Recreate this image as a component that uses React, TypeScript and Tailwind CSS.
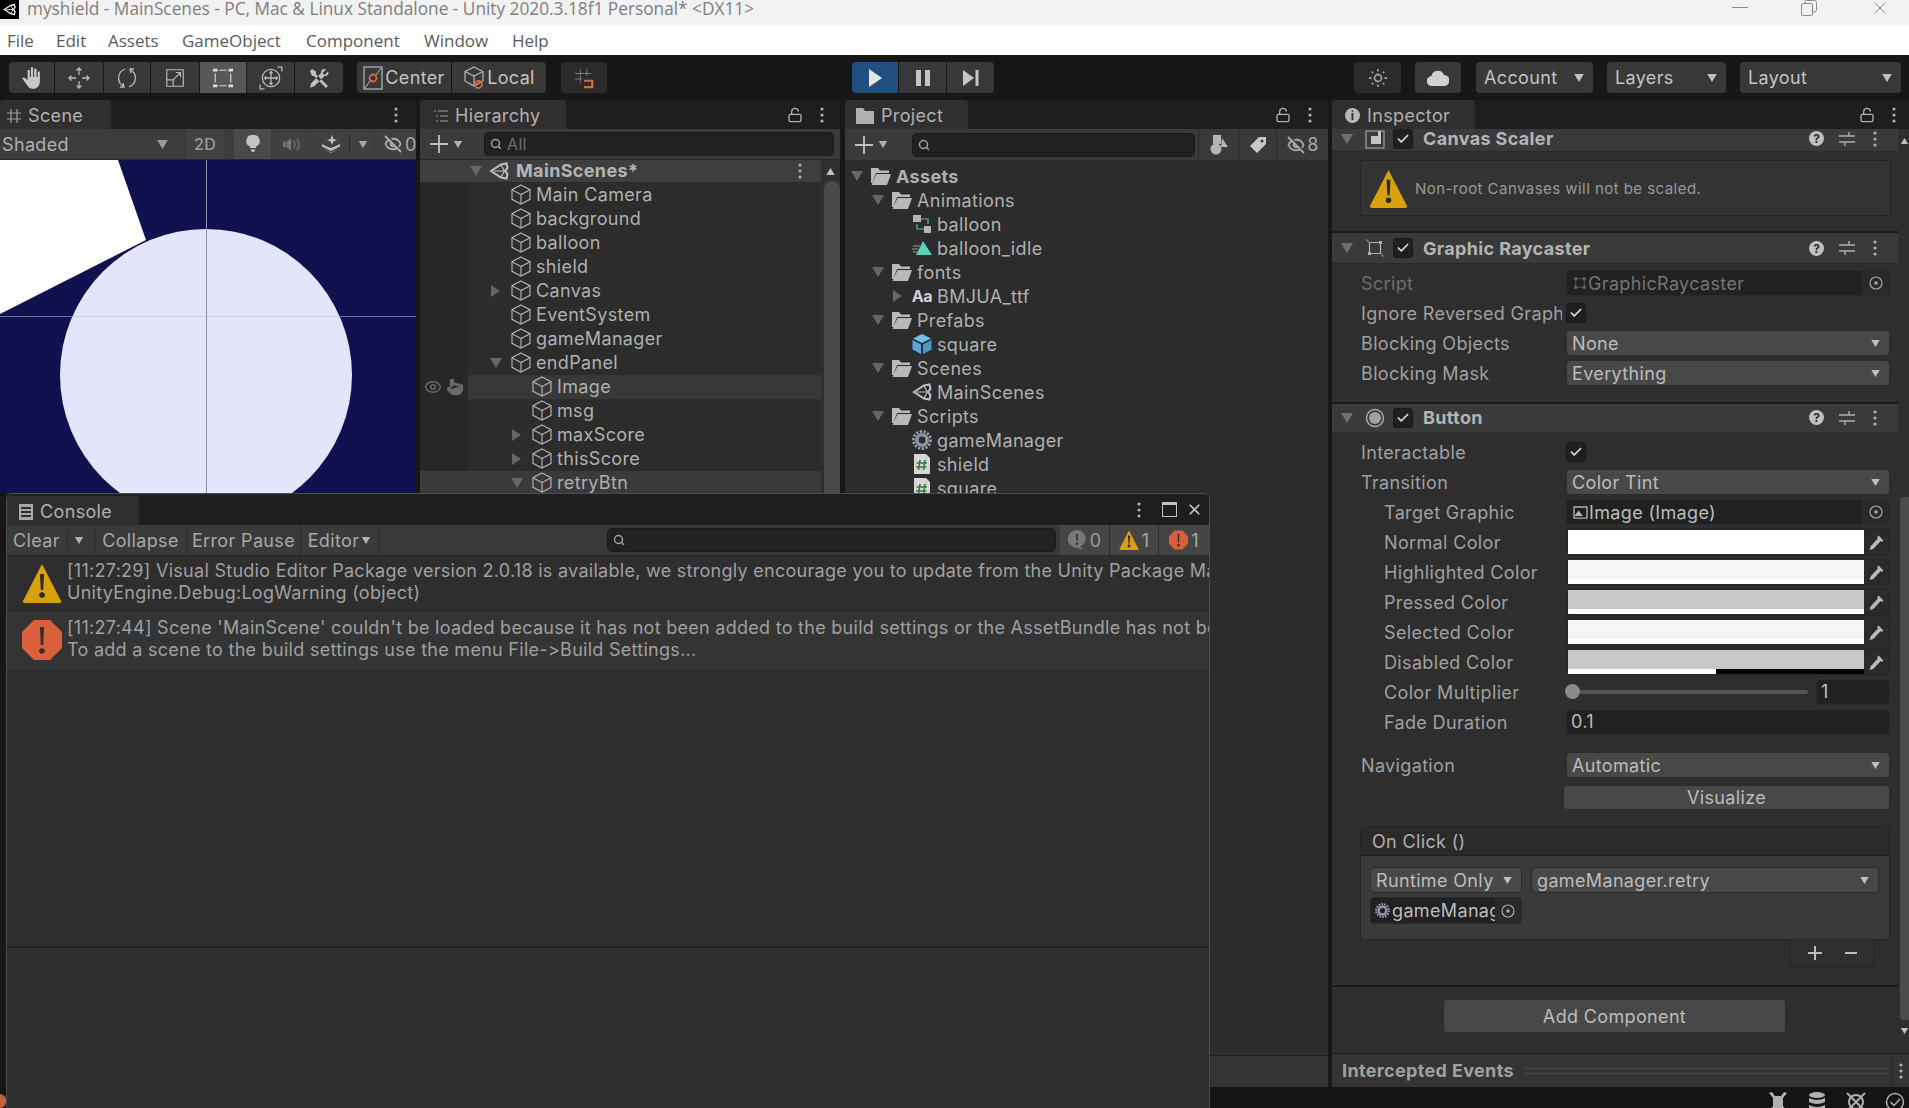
import React from 'react'
import { Check, Eye, EyeOff, LockOpen, Pointer, Search, X } from 'lucide-react'

const Tri = ({ dir = 'down', className = 'w-[11px] h-[9px] text-[#9a9a9a]' }: { dir?: 'down' | 'right' | 'up'; className?: string }) => (
  <svg viewBox="0 0 12 10" className={className}>
    {dir === 'down' && <path d="M0 0H12L6 10Z" fill="currentColor" />}
    {dir === 'up' && <path d="M0 10H12L6 0Z" fill="currentColor" />}
    {dir === 'right' && <path d="M1 -1V11L10 5Z" fill="currentColor" />}
  </svg>
)

const Kebab = ({ className = '' }: { className?: string }) => (
  <svg viewBox="0 0 4 16" className={`w-[4px] h-[16px] text-[#b0b0b0] ${className}`}>
    <circle cx="2" cy="2" r="1.6" fill="currentColor" />
    <circle cx="2" cy="8" r="1.6" fill="currentColor" />
    <circle cx="2" cy="14" r="1.6" fill="currentColor" />
  </svg>
)

const Cube = () => (
  <svg viewBox="0 0 20 20" className="w-[20px] h-[21px] shrink-0 text-[#b0b0b0]" fill="none" stroke="currentColor" strokeWidth="1.2">
    <path d="M10 .5L19 5.2V14.8L10 19.5L1 14.8V5.2Z" />
    <path d="M1 5.2L10 10L19 5.2M10 10V19.5" />
  </svg>
)

const UnityMark = ({ className = 'w-[20px] h-[20px] text-[#c0c0c0]' }: { className?: string }) => (
  <svg viewBox="0 0 20 20" className={`shrink-0 ${className}`} fill="none" stroke="currentColor" strokeWidth="2">
    <path d="M2 10L12 3.5L17.5 2.5L18.5 7L16 10L18.5 13L17.5 17.5L12 16.5Z" />
    <path d="M5 10H15.5M15.5 10L12 4M15.5 10L12 16" strokeWidth="1.2" />
  </svg>
)

const FolderOpen = () => (
  <svg viewBox="0 0 20 18" className="w-[20px] h-[18px] shrink-0">
    <path d="M0 1H7L9 3.5H18V6H5L1.5 16H0Z" fill="#b9b9b9" />
    <path d="M5.5 7H20L16 18H0.5Z" fill="#b9b9b9" />
  </svg>
)

const Gear = ({ className = 'w-[20px] h-[20px]', hole = '#2c2c2c' }: { className?: string; hole?: string }) => (
  <svg viewBox="0 0 20 20" className={`shrink-0 ${className}`}>
    <circle cx="10" cy="10" r="8.6" fill="none" stroke="#9aa0b4" strokeWidth="2.6" strokeDasharray="2.2 1.6" />
    <circle cx="10" cy="10" r="7" fill="#8d92a6" />
    <circle cx="10" cy="10" r="3.4" fill={hole} />
  </svg>
)

const ScriptIcon = () => (
  <svg viewBox="0 0 20 20" className="w-[20px] h-[20px] shrink-0">
    <path d="M2 0H14L18 4V20H2Z" fill="#d6d6d6" />
    <path d="M8 6L6.5 16M13 6L11.5 16M4.5 9H15M4 13H14.5" stroke="#2f7d3c" strokeWidth="1.6" fill="none" />
  </svg>
)

const Warn = ({ className = 'w-[40px] h-[40px]' }: { className?: string }) => (
  <svg viewBox="0 0 40 40" className={`shrink-0 ${className}`}>
    <path d="M20 1L39 38Q39.5 40 37 40H3Q0.5 40 1 38Z" fill="#d9a10d" />
    <path d="M18 11H22L21.2 27H18.8Z" fill="#2a2a2a" />
    <circle cx="20" cy="32" r="2.8" fill="#2a2a2a" />
  </svg>
)

const ErrorIcon = ({ className = 'w-[40px] h-[40px]' }: { className?: string }) => (
  <svg viewBox="0 0 40 40" className={`shrink-0 ${className}`}>
    <path d="M12 0H28L40 12V28L28 40H12L0 28V12Z" fill="#d9603a" />
    <path d="M18 7H22L21.2 25H18.8Z" fill="#2f2f2f" />
    <circle cx="20" cy="31" r="2.8" fill="#2f2f2f" />
  </svg>
)

const Sliders = () => (
  <svg viewBox="0 0 16 16" className="w-[16px] h-[16px] text-[#b0b0b0]" fill="none" stroke="currentColor" strokeWidth="1.4">
    <path d="M0 5H16M0 11H16M10 1V5M6 11V15" />
  </svg>
)

const HelpDot = () => (
  <span className="w-[15px] h-[15px] rounded-full bg-[#c0c0c0] text-[#2d2d2d] text-[12px] font-bold leading-[15px] text-center tracking-normal">?</span>
)

const Target = () => (
  <svg viewBox="0 0 14 14" className="w-[14px] h-[14px] text-[#a8a8a8]" fill="none" stroke="currentColor" strokeWidth="1.2">
    <circle cx="7" cy="7" r="6" />
    <circle cx="7" cy="7" r="1.8" fill="currentColor" stroke="none" />
  </svg>
)

const Dropper = () => (
  <svg viewBox="0 0 16 16" className="w-[17px] h-[17px] text-[#b8b8b8]" fill="currentColor">
    <path d="M10 1.5L14.5 6L13 7.5L12 6.5L5 14L1.5 15L2.5 11.5L9.5 4L8.5 3Z" />
  </svg>
)

const Btn = ({ className = '', bg = 'bg-[#383838]', children }: { className?: string; bg?: string; children?: React.ReactNode }) => (
  <div className={`h-[31px] flex items-center justify-center ${bg} ${className}`}>{children}</div>
)

const MENU = [
  { label: 'File', w: 'w-[49px]' },
  { label: 'Edit', w: 'w-[52px]' },
  { label: 'Assets', w: 'w-[74px]' },
  { label: 'GameObject', w: 'w-[124px]' },
  { label: 'Component', w: 'w-[118px]' },
  { label: 'Window', w: 'w-[88px]' },
  { label: 'Help', w: 'w-[60px]' },
]

const TopToolbar = () => (
  <div className="h-[45px] bg-[#171717] flex items-start pt-[7px] text-[#c4c4c4] shrink-0">
    <div className="ml-[9px] flex gap-px rounded-[4px] overflow-hidden">
      <Btn className="w-[45px]">
        <svg viewBox="0 0 24 24" className="w-[26px] h-[26px] text-[#c8c8c8]" fill="currentColor">
          <path d="M11 2h2v9h1V3.5h2.2V11h1V6h2.1v9c0 4-2.5 7-6.3 7-3 0-4.5-1.5-6-4L3 12.5l1.6-1.2L8 14V4.5h2V11h1Z" />
        </svg>
      </Btn>
      <Btn className="w-[48px]">
        <svg viewBox="0 0 24 24" className="w-[24px] h-[24px] text-[#b8b8b8]" fill="none" stroke="currentColor" strokeWidth="1.3">
          <path d="M12 2V9M12 15V22M2 12H9M15 12H22M9.5 4.5L12 2L14.5 4.5M9.5 19.5L12 22L14.5 19.5M4.5 9.5L2 12L4.5 14.5M19.5 9.5L22 12L19.5 14.5" />
        </svg>
      </Btn>
      <Btn className="w-[46px]">
        <svg viewBox="0 0 24 24" className="w-[24px] h-[24px] text-[#b8b8b8]" fill="none" stroke="currentColor" strokeWidth="1.3">
          <path d="M10 3A9.5 9.5 0 0 0 9 20.5M14 21A9.5 9.5 0 0 0 15 3.5M8 17L9 21L5 21M16 7L15 3L19 3" />
        </svg>
      </Btn>
      <Btn className="w-[48px]">
        <svg viewBox="0 0 24 24" className="w-[22px] h-[22px] text-[#b8b8b8]" fill="none" stroke="currentColor" strokeWidth="1.3">
          <path d="M3 3H21V21H3ZM3 14H10V21M10 14L18 6M13 6H18V11" />
        </svg>
      </Btn>
      <Btn className="w-[46px]" bg="bg-[#585858]">
        <svg viewBox="0 0 24 24" className="w-[22px] h-[22px] text-[#dcdcdc]" fill="currentColor">
          <path d="M1 2H6V5H1ZM18 2H23V5H18ZM1 19H6V22H1ZM18 19H23V22H18Z" />
          <path d="M8 3.5H16M8 20.5H16M3.5 7V17M20.5 7V17" stroke="currentColor" strokeWidth="1.2" />
        </svg>
      </Btn>
      <Btn className="w-[47px]">
        <svg viewBox="0 0 24 24" className="w-[26px] h-[26px] text-[#b8b8b8]" fill="none" stroke="currentColor" strokeWidth="1.2">
          <circle cx="12" cy="12" r="8" />
          <path d="M12 6V18M6 12H18M10.5 7.5L12 6L13.5 7.5M10.5 16.5L12 18L13.5 16.5M7.5 10.5L6 12L7.5 13.5M16.5 10.5L18 12L16.5 13.5M2 18V22H6M22 6V2H18" />
        </svg>
      </Btn>
      <Btn className="w-[48px]">
        <svg viewBox="0 0 24 24" className="w-[24px] h-[24px] text-[#c0c0c0]" fill="currentColor">
          <path d="M3 5L5 3L9 5.5V8L21 20L19 22L7 10H5ZM21 5.5L17.5 9L15.5 7L19 3.5C16.5 2 13.5 4 14 7L4 17.5L3 21.5L7 20.5L17.5 10C20 10.5 22.5 8 21 5.5Z" />
        </svg>
      </Btn>
    </div>
    <div className="ml-[14px] flex gap-px rounded-[4px] overflow-hidden text-[18px]">
      <Btn className="w-[94px] gap-[2px]">
        <svg viewBox="0 0 20 24" className="w-[20px] h-[24px]" fill="none">
          <rect x="1" y="1" width="18" height="22" stroke="#b8b8b8" strokeWidth="1.2" />
          <circle cx="10" cy="12" r="3.5" stroke="#e06c3c" strokeWidth="1.8" />
          <path d="M2 22L7 15M13 9L18 2" stroke="#b8b8b8" strokeWidth="1" />
        </svg>
        Center
      </Btn>
      <Btn className="w-[94px] gap-[2px]">
        <svg viewBox="0 0 22 24" className="w-[22px] h-[24px]" fill="none" stroke="#b8b8b8" strokeWidth="1.2">
          <path d="M11 1L20 5.5V15L11 20L2 15V5.5Z" />
          <path d="M2 5.5L11 10L20 5.5M11 10V20" />
          <circle cx="15.5" cy="18.5" r="3.5" stroke="#e06c3c" strokeWidth="1.8" />
        </svg>
        Local
      </Btn>
    </div>
    <Btn className="ml-[15px] w-[46px] rounded-[4px]" bg="bg-[#2a2a2a]">
      <svg viewBox="0 0 24 24" className="w-[22px] h-[22px]" fill="none" stroke="#7a7a7a" strokeWidth="1.1">
        <path d="M8 2V18M15 2V10M2 7H20M2 13H10" />
        <path d="M12 15H21V22H12" stroke="#d86c3c" strokeWidth="2.4" />
      </svg>
    </Btn>
    <div className="ml-[245px] flex gap-px rounded-[4px] overflow-hidden">
      <Btn className="w-[46px]" bg="bg-[#1f4f7f]">
        <svg viewBox="0 0 14 18" className="w-[14px] h-[18px]"><path d="M1 0V18L14 9Z" fill="#e6e6e6" /></svg>
      </Btn>
      <Btn className="w-[47px]">
        <svg viewBox="0 0 14 18" className="w-[14px] h-[18px]"><path d="M0 1H5V17H0ZM9 1H14V17H9Z" fill="#c4c4c4" /></svg>
      </Btn>
      <Btn className="w-[47px]">
        <svg viewBox="0 0 16 18" className="w-[16px] h-[18px]"><path d="M0 1V17L11 9ZM12.5 1H15.5V17H12.5Z" fill="#c4c4c4" /></svg>
      </Btn>
    </div>
    <Btn className="ml-[360px] w-[47px] rounded-[4px]" bg="bg-[#2a2a2a]">
      <svg viewBox="0 0 20 20" className="w-[20px] h-[20px] text-[#9a9a9a]" fill="none" stroke="currentColor" strokeWidth="1.8">
        <circle cx="10" cy="10" r="3.5" />
        <path d="M10 1V3.5M10 16.5V19M1 10H3.5M16.5 10H19M3.7 3.7L5.2 5.2M14.8 14.8L16.3 16.3M3.7 16.3L5.2 14.8M14.8 5.2L16.3 3.7" />
      </svg>
    </Btn>
    <Btn className="ml-[14px] w-[46px] rounded-[4px]">
      <svg viewBox="0 0 22 16" className="w-[22px] h-[16px]" fill="#d0d0d0"><path d="M5 16A5 5 0 0 1 4.5 6A6.5 6.5 0 0 1 17 5A5.5 5.5 0 0 1 17 16Z" /></svg>
    </Btn>
    {[
      { label: 'Account', cls: 'ml-[15px] w-[117px]' },
      { label: 'Layers', cls: 'ml-[14px] w-[119px]' },
      { label: 'Layout', cls: 'ml-[14px] w-[161px]' },
    ].map((b) => (
      <Btn key={b.label} className={`${b.cls} rounded-[4px] !justify-between pl-[8px] pr-[8px] text-[18px]`}>
        {b.label}
        <Tri className="w-[12px] h-[8px] text-[#c0c0c0]" />
      </Btn>
    ))}
  </div>
)

const Tab = ({ icon, label, w }: { icon: React.ReactNode; label: string; w: string }) => (
  <div className={`h-[29px] ${w} rounded-t-[4px] bg-[#2f2f2f] flex items-center gap-[7px] pl-[7px] pt-[2px] text-[18px] text-[#b0b0b0] shrink-0`}>
    {icon}
    {label}
  </div>
)

const TabBar = ({ children, tools, pad = 'pr-[16px]' }: { children: React.ReactNode; tools?: React.ReactNode; pad?: string }) => (
  <div className="h-[29px] bg-[#1e1e1e] flex items-center shrink-0">
    {children}
    <div className={`ml-auto flex items-center gap-[17px] ${pad}`}>{tools}</div>
  </div>
)

const SearchBox = ({ className, placeholder }: { className: string; placeholder?: string }) => (
  <div className={`h-[24px] rounded-[5px] bg-[#212121] border border-[#191919] flex items-center gap-[5px] pl-[5px] text-[16px] text-[#6e6e6e] ${className}`}>
    <Search className="w-[12px] h-[12px] text-[#a0a0a0]" strokeWidth={3} />
    {placeholder}
  </div>
)

const Plus = () => (
  <div className="flex items-center gap-[5px]">
    <svg viewBox="0 0 18 18" className="w-[18px] h-[18px] text-[#c0c0c0]" fill="none" stroke="currentColor" strokeWidth="1.8"><path d="M9 0V18M0 9H18" /></svg>
    <Tri className="w-[10px] h-[7px] text-[#b0b0b0]" />
  </div>
)

const ScenePanel = () => (
  <div className="w-[416px] mr-[4px] flex flex-col shrink-0">
    <TabBar tools={<Kebab />} pad="pr-[18px]">
      <Tab
        w="w-[111px]"
        label="Scene"
        icon={
          <svg viewBox="0 0 14 14" className="w-[14px] h-[14px] text-[#a0a0a0]" fill="none" stroke="currentColor" strokeWidth="1.2"><path d="M4 0V14M10 0V14M0 4H14M0 10H14" /></svg>
        }
      />
    </TabBar>
    <div className="h-[31px] bg-[#3c3c3c] flex items-center text-[#a8a8a8] text-[18px] shrink-0 border-b border-[#262626]">
      <div className="w-[176px] flex items-center justify-between pl-[2px] pr-[8px] text-[#b0b0b0]">Shaded<Tri /></div>
      <div className="ml-[10px] w-[38px] h-full bg-[#424242] flex items-center justify-center text-[16px] text-[#9c9c9c] font-medium">2D</div>
      <div className="ml-[10px] w-[37px] h-full bg-[#4a4a4a] flex items-center justify-center">
        <svg viewBox="0 0 14 18" className="w-[14px] h-[18px]" fill="#c4c4c4"><path d="M7 0A6 6 0 0 1 10 11.5V13H4V11.5A6 6 0 0 1 7 0ZM4.5 14.5H9.5L8 17H6Z" /></svg>
      </div>
      <div className="ml-[2px] w-[38px] h-full bg-[#404040] flex items-center justify-center">
        <svg viewBox="0 0 20 14" className="w-[18px] h-[13px]" fill="#777"><path d="M0 4H3V10H0ZM4 4L9 0V14L4 10ZM11 3Q14 7 11 11L12 12Q16 7 12 2ZM15 1Q19 7 15 13L16 14Q21 7 16 0Z" /></svg>
      </div>
      <div className="ml-px w-[61px] h-full bg-[#404040] flex items-center pl-[9px]">
        <svg viewBox="0 0 20 18" className="w-[20px] h-[18px]" fill="#c0c0c0"><path d="M11 0L12.5 4L16 5L12.5 6.5L11 10L9.5 6.5L6 5L9.5 4ZM1 9L6 11.5L10 13L15 11L19 9V11.5L10 16L1 11.5ZM1 13L10 18L19 13L10 17.5Z" /></svg>
        <div className="w-px h-[20px] bg-[#2a2a2a] ml-[8px] mr-[8px]" />
        <Tri className="w-[10px] h-[7px] text-[#a8a8a8]" />
      </div>
      <div className="ml-[2px] flex-1 h-full bg-[#404040] flex items-center pl-[7px] gap-px overflow-hidden">
        <EyeOff className="w-[22px] h-[18px] text-[#b0b0b0] shrink-0" strokeWidth={2.4} />
        <span>0</span>
      </div>
    </div>
    {/* scene view is a picture, drawn in one svg */}
    <svg viewBox="0 0 416 333" className="w-[416px] h-[333px] shrink-0">
      <rect width="416" height="333" fill="#11114f" />
      <path d="M0 0H118L146 80L0 154Z" fill="#ffffff" />
      <circle cx="206" cy="215" r="146" fill="#e4e4fb" />
      <path d="M206.5 0V333" stroke="#8e8ea8" strokeWidth="1" />
      <path d="M0 156.5H416" stroke="#b8b8e0" strokeWidth="1" opacity="0.55" />
    </svg>
  </div>
)

const HIERARCHY = [
  { name: 'Main Camera', pad: 'pl-[22px]' },
  { name: 'background', pad: 'pl-[22px]' },
  { name: 'balloon', pad: 'pl-[22px]' },
  { name: 'shield', pad: 'pl-[22px]' },
  { name: 'Canvas', pad: 'pl-[22px]', arrow: 'right' as const },
  { name: 'EventSystem', pad: 'pl-[22px]' },
  { name: 'gameManager', pad: 'pl-[22px]' },
  { name: 'endPanel', pad: 'pl-[22px]', arrow: 'down' as const },
  { name: 'Image', pad: 'pl-[43px]', hl: true, vis: true },
  { name: 'msg', pad: 'pl-[43px]' },
  { name: 'maxScore', pad: 'pl-[43px]', arrow: 'right' as const },
  { name: 'thisScore', pad: 'pl-[43px]', arrow: 'right' as const },
  { name: 'retryBtn', pad: 'pl-[43px]', arrow: 'down' as const, sel: true },
]

const HierarchyPanel = () => (
  <div className="w-[420px] mr-[5px] flex flex-col shrink-0">
    <TabBar
      tools={
        <>
          <LockOpen className="w-[16px] h-[16px] text-[#b0b0b0]" />
          <Kebab />
        </>
      }
    >
      <Tab
        w="w-[146px]"
        label="Hierarchy"
        icon={
          <svg viewBox="0 0 14 12" className="w-[14px] h-[12px] ml-[7px] text-[#a0a0a0]" fill="none" stroke="currentColor" strokeWidth="1.2"><path d="M0 1H2M4 1H14M2 6H4M6 6H14M2 11H4M6 11H14" /></svg>
        }
      />
    </TabBar>
    <div className="h-[31px] bg-[#3a3a3a] flex items-center pl-[10px] pr-[6px] shrink-0 border-b border-[#262626]">
      <Plus />
      <SearchBox className="ml-[21px] flex-1" placeholder="All" />
    </div>
    <div className="flex flex-1 min-h-0">
      <div className="flex-1 bg-[#2c2c2c]">
        <div className="h-[23px] bg-[#3e3e3e] border-b border-[#2a2a2a] flex items-center pl-[50px] pr-[19px] pb-[1px]">
          <Tri className="w-[12px] h-[12px] text-[#666]" />
          <span className="ml-[7px]"><UnityMark /></span>
          <span className="ml-[7px] text-[18px] font-bold text-[#b4b4b4]">MainScenes*</span>
          <Kebab className="ml-auto" />
        </div>
        {HIERARCHY.map((r) => (
          <div key={r.name} className={`h-[24px] flex ${r.sel ? 'bg-[#3a3a3a]' : ''}`}>
            <div className={`w-[48px] flex items-center gap-[2px] pl-[2px] shrink-0 ${r.sel ? '' : 'bg-[#272727]'}`}>
              {r.vis && (
                <>
                  <Eye className="w-[22px] h-[18px] text-[#666]" />
                  <Pointer className="w-[18px] h-[18px] text-[#6a6a6a]" fill="#6a6a6a" />
                </>
              )}
            </div>
            <div className={`flex-1 flex items-center pb-[1px] ${r.pad} ${r.hl ? 'bg-[#383838]' : ''}`}>
              <div className="w-[12px] shrink-0 flex justify-center">{r.arrow && <Tri dir={r.arrow} className="w-[12px] h-[12px] text-[#666]" />}</div>
              <span className="ml-[9px]"><Cube /></span>
              <span className="ml-[5px] text-[18px] text-[#b0b0b0]">{r.name}</span>
            </div>
          </div>
        ))}
      </div>
      <div className="w-[19px] bg-[#2f2f2f] flex flex-col items-center shrink-0">
        <Tri dir="up" className="w-[11px] h-[7px] mt-[8px] text-[#c0c0c0]" />
        <div className="mt-[6px] ml-[3px] w-[16px] flex-1 rounded-t-[8px] bg-[#4a4a4a]" />
      </div>
    </div>
  </div>
)

const PROJECT: { name: string; pad: string; icon: React.ReactNode; arrow?: 'down' | 'right'; bold?: boolean }[] = [
  { name: 'Assets', pad: 'pl-[6px]', icon: <FolderOpen />, arrow: 'down', bold: true },
  { name: 'Animations', pad: 'pl-[27px]', icon: <FolderOpen />, arrow: 'down' },
  {
    name: 'balloon',
    pad: 'pl-[47px]',
    icon: (
      <svg viewBox="0 0 20 20" className="w-[20px] h-[20px]">
        <path d="M6 5H16V10M15 15H5V10" fill="none" stroke="#4fc3a1" strokeWidth="1.2" />
        <rect x="1" y="1" width="8" height="7" fill="#b4b4b4" />
        <rect x="12" y="12" width="7" height="7" fill="#b4b4b4" />
      </svg>
    ),
  },
  {
    name: 'balloon_idle',
    pad: 'pl-[47px]',
    icon: (
      <svg viewBox="0 0 20 20" className="w-[20px] h-[20px]">
        <path d="M11 3L20 17H4Z" fill="#5fd0b8" />
        <path d="M1 8H8M0 11H6M1 14H5" stroke="#9a9a9a" strokeWidth="1" />
      </svg>
    ),
  },
  { name: 'fonts', pad: 'pl-[27px]', icon: <FolderOpen />, arrow: 'down' },
  { name: 'BMJUA_ttf', pad: 'pl-[47px]', icon: <span className="text-[16px] font-bold text-[#d0d0d0] tracking-tight">Aa</span>, arrow: 'right' },
  { name: 'Prefabs', pad: 'pl-[27px]', icon: <FolderOpen />, arrow: 'down' },
  {
    name: 'square',
    pad: 'pl-[47px]',
    icon: (
      <svg viewBox="0 0 20 20" className="w-[20px] h-[20px]">
        <path d="M10 0L19 4.5L10 9L1 4.5Z" fill="#6fc0ec" />
        <path d="M0.5 6L9 10.5V20L0.5 15.5Z" fill="#57a8d8" />
        <path d="M19.5 6L11 10.5V20L19.5 15.5Z" fill="#4a98c8" />
      </svg>
    ),
  },
  { name: 'Scenes', pad: 'pl-[27px]', icon: <FolderOpen />, arrow: 'down' },
  { name: 'MainScenes', pad: 'pl-[47px]', icon: <UnityMark /> },
  { name: 'Scripts', pad: 'pl-[27px]', icon: <FolderOpen />, arrow: 'down' },
  { name: 'gameManager', pad: 'pl-[47px]', icon: <Gear /> },
  { name: 'shield', pad: 'pl-[47px]', icon: <ScriptIcon /> },
  { name: 'square', pad: 'pl-[47px]', icon: <ScriptIcon /> },
]

const ProjectPanel = () => (
  <div className="w-[483px] mr-[4px] flex flex-col shrink-0">
    <TabBar
      tools={
        <>
          <LockOpen className="w-[16px] h-[16px] text-[#b0b0b0]" />
          <Kebab />
        </>
      }
    >
      <Tab
        w="w-[123px]"
        label="Project"
        icon={
          <svg viewBox="0 0 18 16" className="w-[18px] h-[16px] ml-[4px]" fill="#b0b0b0"><path d="M0 0H7L9 3H18V16H0Z" /></svg>
        }
      />
    </TabBar>
    <div className="h-[31px] bg-[#3a3a3a] flex items-center pl-[10px] shrink-0">
      <Plus />
      <SearchBox className="ml-[24px] w-[283px]" />
      <div className="ml-[3px] w-[40px] h-full border-l border-[#2a2a2a] flex items-center justify-center">
        <svg viewBox="0 0 18 20" className="w-[18px] h-[20px]" fill="#b4b4b4"><rect x="3" y="0" width="8" height="9" /><path d="M12 3L18 12H11Z" /><circle cx="6" cy="14" r="5.5" /></svg>
      </div>
      <div className="w-[38px] h-full border-l border-[#2a2a2a] flex items-center justify-center">
        <svg viewBox="0 0 16 16" className="w-[16px] h-[16px]" fill="#c8c8c8"><path d="M9 0H16V7L7 16L0 9Z" /><circle cx="12" cy="4" r="1.5" fill="#3a3a3a" /></svg>
      </div>
      <div className="flex-1 h-full border-l border-[#2a2a2a] flex items-center justify-center gap-px text-[18px] text-[#a8a8a8]">
        <EyeOff className="w-[20px] h-[18px] shrink-0" strokeWidth={2.4} />
        8
      </div>
    </div>
    <div className="flex-1 min-h-0 bg-[#2c2c2c] pt-[4px] overflow-hidden">
      {PROJECT.map((r, i) => (
        <div key={i} className={`h-[24px] flex items-center ${r.pad}`}>
          <div className="w-[12px] shrink-0 flex justify-center">{r.arrow && <Tri dir={r.arrow} className="w-[12px] h-[12px] text-[#666]" />}</div>
          <div className="ml-[8px] w-[20px] flex justify-center shrink-0">{r.icon}</div>
          <span className={`ml-[5px] text-[18px] text-[#b0b0b0] ${r.bold ? 'font-bold' : ''}`}>{r.name}</span>
        </div>
      ))}
    </div>
    <div className="h-[32px] bg-[#343434] border-t border-[#1e1e1e] shrink-0" />
  </div>
)

const CheckBox = () => (
  <span className="w-[20px] h-[20px] rounded-[3px] bg-[#1f1f1f] border border-[#191919] flex items-center justify-center shrink-0">
    <Check className="w-[14px] h-[14px] text-[#d8d8d8]" strokeWidth={3} />
  </span>
)

const CompHeader = ({ h, icon, title }: { h: string; icon: React.ReactNode; title: string }) => (
  <div className={`${h} bg-[#3a3a3a] flex items-center pl-[9px] pr-[21px] border-b border-[#2a2a2a] shrink-0`}>
    <Tri className="w-[12px] h-[10px] text-[#707070]" />
    <div className="ml-[11px] w-[22px] flex justify-center">{icon}</div>
    <span className="ml-[7px]"><CheckBox /></span>
    <span className="ml-[10px] text-[18px] font-bold text-[#b4b4b4]">{title}</span>
    <div className="ml-auto flex items-center gap-[15px]">
      <HelpDot />
      <Sliders />
      <span className="ml-[3px]"><Kebab /></span>
    </div>
  </div>
)

const Field = ({ label, deep, dim, children }: { label: string; deep?: boolean; dim?: boolean; children: React.ReactNode }) => (
  <div className={`h-[30px] flex items-center pr-[8px] ${deep ? 'pl-[52px]' : 'pl-[29px]'}`}>
    <span className={`text-[18px] whitespace-nowrap overflow-hidden shrink-0 ${deep ? 'w-[182px]' : 'w-[201px] mr-[4px]'} ${dim ? 'text-[#6c6c6c]' : 'text-[#a0a0a0]'}`}>{label}</span>
    <div className="flex-1 flex items-center min-w-0">{children}</div>
  </div>
)

const Select = ({ value, className = 'w-full' }: { value: string; className?: string }) => (
  <div className={`h-[26px] rounded-[4px] bg-[#484848] border border-[#2c2c2c] flex items-center justify-between pl-[5px] pr-[8px] text-[18px] text-[#bcbcbc] ${className}`}>
    {value}
    <Tri className="w-[11px] h-[7px] text-[#c0c0c0]" />
  </div>
)

const ObjField = ({ icon, value, dim }: { icon: React.ReactNode; value: string; dim?: boolean }) => (
  <div className={`w-full h-[26px] rounded-[4px] bg-[#212121] border border-[#2a2a2a] flex items-center text-[18px] ${dim ? 'text-[#757575]' : 'text-[#bcbcbc]'}`}>
    <div className="flex-1 flex items-center pl-[6px] gap-px min-w-0">{icon}{value}</div>
    <div className="w-[27px] h-full bg-[#2a2a2a] rounded-r-[4px] flex items-center justify-center"><Target /></div>
  </div>
)

const RectIcon = ({ className = '' }: { className?: string }) => (
  <svg viewBox="0 0 18 18" className={`w-[14px] h-[14px] ${className}`} fill="none" stroke="currentColor" strokeWidth="1.2">
    <path d="M3.5 3.5H14.5V14.5H3.5Z" />
    <path d="M2 2H5V5H2ZM13 2H16V5H13ZM2 13H5V16H2ZM13 13H16V16H13Z" fill="currentColor" />
  </svg>
)

const Swatch = ({ top, bottom = 'bg-white', half }: { top: string; bottom?: string; half?: boolean }) => (
  <div className="w-full h-[28px] rounded-[4px] border border-[#262626] bg-[#2a2a2a] flex items-center overflow-hidden">
    <div className="w-[296px] h-[24px] ml-[1px] flex flex-col">
      <div className={`h-[19px] ${top}`} />
      <div className={`h-[5px] flex ${bottom}`}>{half && <div className="w-[148px] bg-white" />}</div>
    </div>
    <div className="flex-1 flex justify-center"><Dropper /></div>
  </div>
)

const COLORS = [
  { label: 'Normal Color', top: 'bg-white' },
  { label: 'Highlighted Color', top: 'bg-[#f5f5f5]' },
  { label: 'Pressed Color', top: 'bg-[#c8c8c8]' },
  { label: 'Selected Color', top: 'bg-[#f5f5f5]' },
  { label: 'Disabled Color', top: 'bg-[#c8c8c8]', bottom: 'bg-black', half: true },
]

const InspectorPanel = () => (
  <div className="flex-1 flex flex-col min-w-0">
    <TabBar
      pad="pr-[13px]"
      tools={
        <>
          <LockOpen className="w-[16px] h-[16px] text-[#b0b0b0]" />
          <Kebab />
        </>
      }
    >
      <Tab
        w="w-[143px]"
        label="Inspector"
        icon={
          <span className="ml-[6px] w-[15px] h-[15px] rounded-full bg-[#b8b8b8] text-[#2d2d2d] text-[12px] font-bold leading-[15px] text-center tracking-normal">i</span>
        }
      />
    </TabBar>
    <div className="flex-1 min-h-0 flex bg-[#2e2e2e]">
      <div className="flex-1 min-w-0 flex flex-col">
        <CompHeader
          h="h-[23px] pb-[3px]"
          title="Canvas Scaler"
          icon={
            <svg viewBox="0 0 20 20" className="w-[20px] h-[20px]" fill="none"><rect x="1" y="2" width="18" height="17" stroke="#a0a0a0" strokeWidth="1.2" /><path d="M6 7H13V2H16V15H6Z" fill="#c4c4c4" /></svg>
          }
        />
        <div className="mt-[8px] ml-[28px] mr-[7px] h-[56px] rounded-[4px] bg-[#333333] border border-[#242424] flex items-center pl-[8px] gap-[7px] shrink-0">
          <Warn className="w-[39px] h-[39px]" />
          <span className="pt-[3px] text-[15px] text-[#9a9a9a] tracking-[0.45px]">Non-root Canvases will not be scaled.</span>
        </div>
        <div className="mt-[15px] h-[2px] bg-[#191919] shrink-0" />
        <CompHeader
          h="h-[31px]"
          title="Graphic Raycaster"
          icon={
            <svg viewBox="0 0 18 18" className="w-[18px] h-[18px]" fill="none">
              <path d="M3.5 3.5H14.5V14.5H3.5Z" stroke="#b0b0b0" strokeWidth="1.2" />
              <path d="M0.5 0.5L3 3M15 15L17.5 17.5" stroke="#4f9aa8" strokeWidth="1.2" />
              <path d="M13 2H16V5H13ZM2 13H5V16H2Z" fill="#b0b0b0" />
            </svg>
          }
        />
        <div className="mt-[4px]">
          <Field label="Script" dim>
            <ObjField dim value="GraphicRaycaster" icon={<RectIcon className="text-[#5f5f5f]" />} />
          </Field>
          <Field label="Ignore Reversed Graphics"><CheckBox /></Field>
          <Field label="Blocking Objects"><Select value="None" /></Field>
          <Field label="Blocking Mask"><Select value="Everything" /></Field>
        </div>
        <div className="mt-[14px] h-[2px] bg-[#191919] shrink-0" />
        <CompHeader
          h="h-[29px] pb-[1px]"
          title="Button"
          icon={
            <svg viewBox="0 0 20 20" className="w-[20px] h-[20px]" fill="none"><circle cx="10" cy="10" r="8.5" stroke="#a8a8a8" strokeWidth="1.5" /><circle cx="10" cy="10" r="6" fill="#a0a0a0" /></svg>
          }
        />
        <div className="mt-[4px]">
          <Field label="Interactable"><CheckBox /></Field>
          <Field label="Transition"><Select value="Color Tint" /></Field>
          <Field label="Target Graphic" deep>
            <ObjField
              value="Image (Image)"
              icon={
                <svg viewBox="0 0 16 14" className="w-[15px] h-[13px] shrink-0" fill="none" stroke="#b0b0b0" strokeWidth="1.5"><path d="M1 1H15V13H1Z" /><path d="M3 10L6 6L9 10Z" fill="#b0b0b0" /></svg>
              }
            />
          </Field>
          {COLORS.map((c) => (
            <Field key={c.label} label={c.label} deep>
              <Swatch top={c.top} bottom={c.bottom} half={c.half} />
            </Field>
          ))}
          <Field label="Color Multiplier" deep>
            <div className="relative w-[242px] h-[4px] rounded-full bg-[#555555]">
              <div className="absolute -left-px -top-[6px] w-[15px] h-[15px] rounded-full bg-[#8a8a8a]" />
            </div>
            <div className="ml-[8px] flex-1 h-[26px] rounded-[4px] bg-[#212121] border border-[#2a2a2a] pl-[4px] text-[18px] text-[#bcbcbc] leading-[24px]">1</div>
          </Field>
          <Field label="Fade Duration" deep>
            <div className="w-full h-[26px] rounded-[4px] bg-[#212121] border border-[#2a2a2a] pl-[4px] text-[18px] text-[#bcbcbc] leading-[24px]">0.1</div>
          </Field>
        </div>
        <div className="mt-[13px]">
          <Field label="Navigation"><Select value="Automatic" /></Field>
        </div>
        <div className="mt-[5px] ml-[231px] mr-[8px] h-[25px] rounded-[4px] bg-[#484848] border border-[#2c2c2c] flex items-center justify-center text-[18px] text-[#bcbcbc] shrink-0">Visualize</div>
        <div className="mt-[16px] ml-[28px] mr-[8px] h-[114px] rounded-[4px] border border-[#242424] bg-[#3a3a3a] shrink-0 flex flex-col overflow-hidden">
          <div className="h-[29px] bg-[#2a2a2a] border-b border-[#1f1f1f] flex items-center pl-[11px] text-[18px] text-[#b0b0b0] shrink-0">On Click ()</div>
          <div className="pt-[11px] pl-[9px] pr-[10px]">
            <div className="flex gap-[9px]">
              <Select value="Runtime Only" className="w-[152px]" />
              <Select value="gameManager.retry" className="flex-1" />
            </div>
            <div className="mt-[4px] w-[152px] h-[27px] rounded-[4px] bg-[#212121] border border-[#2a2a2a] flex items-center text-[18px] text-[#bcbcbc] overflow-hidden">
              <div className="w-[124px] flex items-center pl-[4px] gap-[2px] overflow-hidden whitespace-nowrap">
                <Gear className="w-[15px] h-[15px]" hole="#212121" />
                gameManager
              </div>
              <div className="flex-1 h-full bg-[#2a2a2a] flex items-center justify-center"><Target /></div>
            </div>
          </div>
        </div>
        <div className="ml-[457px] w-[86px] h-[28px] -mt-px rounded-b-[4px] border border-t-0 border-[#242424] bg-[#2f2f2f] flex items-center justify-center gap-[23px] shrink-0">
          <svg viewBox="0 0 14 14" className="w-[14px] h-[14px]" fill="none" stroke="#c0c0c0" strokeWidth="2"><path d="M7 0V14M0 7H14" /></svg>
          <svg viewBox="0 0 12 14" className="w-[12px] h-[14px]" fill="none" stroke="#c0c0c0" strokeWidth="2"><path d="M0 7H12" /></svg>
        </div>
        <div className="mt-[18px] h-[2px] bg-[#191919] shrink-0" />
        <div className="mt-[12px] ml-[111px] w-[343px] h-[34px] rounded-[4px] bg-[#484848] border border-[#2c2c2c] flex items-center justify-center pt-[1px] text-[18px] text-[#bcbcbc] shrink-0">Add Component</div>
      </div>
      <div className="w-[11px] flex flex-col items-end shrink-0">
        <Tri dir="up" className="w-[9px] h-[6px] mt-[9px] text-[#c0c0c0]" />
        <div className="mt-[353px] w-[9px] h-[523px] rounded-l-[4px] bg-[#4c4c4c]" />
        <Tri className="w-[9px] h-[6px] mt-[8px] text-[#c0c0c0]" />
      </div>
    </div>
    <div className="h-[34px] bg-[#343434] border-t border-[#1e1e1e] flex items-center pl-[10px] shrink-0">
      <span className="text-[18px] font-bold text-[#a0a0a0] whitespace-nowrap">Intercepted Events</span>
      <div className="ml-[10px] flex-1 h-[6px] border-y border-[#4c4c4c]" />
      <div className="ml-[4px] w-[18px] h-full border-l border-[#262626] flex items-center justify-center"><Kebab /></div>
    </div>
  </div>
)

const ConsoleWindow = () => (
  <div className="absolute left-[6px] top-[493px] bottom-0 w-[1204px] rounded-t-[6px] border border-b-0 border-[#4d4d4d] bg-[#2d2d2d] flex flex-col overflow-hidden">
    <div className="h-[31px] bg-[#1e1e1e] flex items-end shrink-0">
      <Tab
        w="w-[132px]"
        label="Console"
        icon={
          <svg viewBox="0 0 14 16" className="w-[14px] h-[16px] ml-[5px]" fill="#a8a8a8"><path d="M0 0H14V16H0ZM2 3V5H12V3ZM2 7V9H12V7ZM2 11V13H12V11Z" fillRule="evenodd" /></svg>
        }
      />
      <div className="ml-auto self-center flex items-center pr-[6px]">
        <Kebab />
        <div className="ml-[21px] w-[15px] h-[15px] border border-t-[3px] border-[#c4c4c4]" />
        <X className="ml-[9px] w-[17px] h-[17px] text-[#c4c4c4]" strokeWidth={2.4} />
      </div>
    </div>
    <div className="h-[31px] bg-[#3a3a3a] flex items-center text-[18px] text-[#a8a8a8] border-b border-[#262626] shrink-0">
      <div className="w-[88px] h-full flex items-center pl-[6px] border-r border-[#2a2a2a]">
        Clear
        <span className="ml-[7px] w-px h-[20px] bg-[#2a2a2a]" />
        <Tri className="ml-[6px] w-[10px] h-[7px] text-[#b0b0b0]" />
      </div>
      <div className="w-[92px] h-full flex items-center justify-center border-r border-[#2a2a2a]">Collapse</div>
      <div className="w-[114px] h-full flex items-center justify-center border-r border-[#2a2a2a]">Error Pause</div>
      <div className="w-[78px] h-full flex items-center justify-center gap-[2px] border-r border-[#2a2a2a]">
        Editor
        <Tri className="w-[10px] h-[7px] text-[#b0b0b0]" />
      </div>
      <SearchBox className="ml-[228px] w-[449px]" />
      <div className="ml-[4px] w-[50px] h-full bg-[#454545] flex items-center justify-center gap-[4px] border-r border-[#2a2a2a] text-[#999]">
        <svg viewBox="0 0 18 20" className="w-[18px] h-[20px]"><path d="M9 0A8.5 8.5 0 0 1 12 16.5L15 20L8 17.5A8.5 8.5 0 0 1 9 0Z" fill="#777" /><path d="M8 4H10L9.7 11H8.3ZM9 12.5A1.2 1.2 0 1 1 9 15A1.2 1.2 0 0 1 9 12.5Z" fill="#333" /></svg>
        0
      </div>
      <div className="w-[49px] h-full bg-[#454545] flex items-center justify-center gap-[3px] border-r border-[#2a2a2a]">
        <Warn className="w-[20px] h-[20px]" />1
      </div>
      <div className="flex-1 h-full bg-[#454545] flex items-center justify-center gap-[3px]">
        <ErrorIcon className="w-[19px] h-[20px]" />1
      </div>
    </div>
    <div className="h-[56px] flex items-start pl-[15px] pt-[7px] gap-[5px] text-[18px] leading-[22px] tracking-[0.28px] text-[#a0a0a0] bg-[#2e2e2e] shrink-0 overflow-hidden">
      <Warn />
      <div className="whitespace-nowrap -mt-[3px]">
        <div>[11:27:29] Visual Studio Editor Package version 2.0.18 is available, we strongly encourage you to update from the Unity Package Manager</div>
        <div>UnityEngine.Debug:LogWarning (object)</div>
      </div>
    </div>
    <div className="h-[58px] flex items-start pl-[15px] pt-[8px] gap-[5px] text-[18px] leading-[22px] tracking-[0.28px] text-[#a0a0a0] bg-[#343434] shrink-0 overflow-hidden">
      <ErrorIcon />
      <div className="whitespace-nowrap -mt-[3px]">
        <div>[11:27:44] Scene 'MainScene' couldn't be loaded because it has not been added to the build settings or the AssetBundle has not been loaded.</div>
        <div>To add a scene to the build settings use the menu File-&gt;Build Settings...</div>
      </div>
    </div>
    <div className="h-[278px] border-b-2 border-[#202020] shrink-0" />
  </div>
)

const StatusBar = () => (
  <div className="h-[21px] bg-[#141414] flex items-start justify-end gap-[19px] pr-[4px] pt-[5px] overflow-hidden shrink-0">
    <svg viewBox="0 0 20 20" className="w-[20px] h-[20px]" fill="#b0b0b0"><path d="M1 1L4 0L7 4H13L16 0L19 1L15 6V14L19 19H1L5 14V6Z" /></svg>
    <svg viewBox="0 0 20 20" className="w-[20px] h-[20px]" fill="#b0b0b0"><ellipse cx="10" cy="3" rx="8" ry="3" /><path d="M2 6Q10 10 18 6V10Q10 14 2 10ZM2 13Q10 17 18 13V20H2Z" /></svg>
    <svg viewBox="0 0 20 20" className="w-[20px] h-[20px]" fill="none" stroke="#b0b0b0" strokeWidth="2"><circle cx="10" cy="10" r="7" /><path d="M1 1L19 19M19 1L1 19" /></svg>
    <svg viewBox="0 0 20 20" className="w-[20px] h-[20px]" fill="none" stroke="#b0b0b0" strokeWidth="1.5"><circle cx="10" cy="10" r="8.5" /><path d="M5.5 10L9 13.5L15 7" /></svg>
  </div>
)

export default function App() {
  return (
    <div className="relative w-[1909px] h-[1108px] overflow-hidden bg-[#141414] flex flex-col font-['Inter',sans-serif] tracking-[0.35px] [font-variant-ligatures:none]">
      <div className="h-[25px] bg-[#f2f2f2] flex items-start shrink-0 font-['Open_Sans',sans-serif] tracking-normal text-[17.25px] leading-[18px] text-[#7e7e7e]">
        <div className="w-[19px] h-[19px] bg-black flex items-center justify-center mr-[8px]">
          <UnityMark className="w-[13px] h-[13px] text-white" />
        </div>
        myshield - MainScenes - PC, Mac &amp; Linux Standalone - Unity 2020.3.18f1 Personal* &lt;DX11&gt;
        <div className="ml-auto flex items-start">
          <div className="w-[16px] h-px bg-[#8a8a8a] mt-[7px] mr-[53px]" />
          <svg viewBox="0 0 16 16" className="w-[16px] h-[16px] mr-[54px]" fill="none" stroke="#8a8a8a" strokeWidth="1">
            <rect x="0.5" y="3.5" width="11" height="12" rx="1.5" />
            <path d="M4 3V2Q4 .5 5.5 .5H13.5Q15.5 .5 15.5 2.5V10Q15.5 12 13 12H12" />
          </svg>
          <X className="w-[18px] h-[18px] text-[#666] mr-[20px] -mt-[1px]" strokeWidth={1} />
        </div>
      </div>
      <div className="h-[30px] bg-white flex items-center pl-[7px] pt-[1px] shrink-0 font-['Open_Sans',sans-serif] tracking-normal text-[17px] text-[#5a5a5a]">
        {MENU.map((m) => (
          <span key={m.label} className={m.w}>{m.label}</span>
        ))}
      </div>
      <TopToolbar />
      <div className="h-[987px] flex bg-[#171717] shrink-0">
        <ScenePanel />
        <HierarchyPanel />
        <ProjectPanel />
        <InspectorPanel />
      </div>
      <StatusBar />
      <ConsoleWindow />
      <div className="absolute left-0 top-[1094px] w-[6px] h-[14px] rounded-r-full bg-[#c2603a]" />
    </div>
  )
}
